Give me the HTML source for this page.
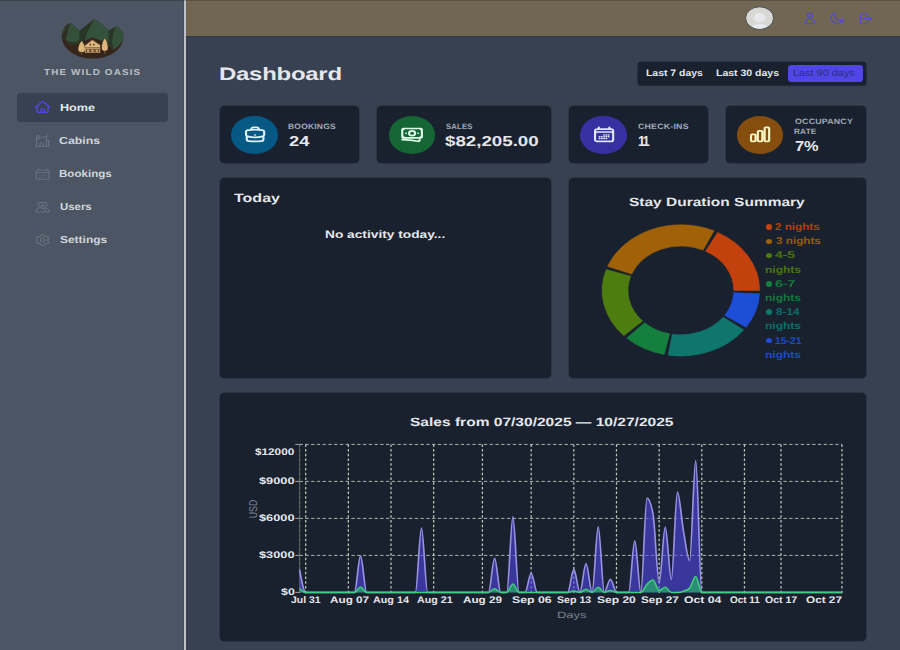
<!DOCTYPE html>
<html lang="en"><head><meta charset="utf-8"><title>The Wild Oasis</title>
<style>
*{margin:0;padding:0;box-sizing:border-box}
html,body{width:900px;height:650px;overflow:hidden;background:#374151;font-family:"Liberation Sans", sans-serif}
body{position:relative}
ul{list-style:none}
.sidebar{position:absolute;left:0;top:0;width:186px;height:650px;background:#4b5563;border-right:2px solid #bec1c7}
.sidebar:after{content:"";position:absolute;left:183px;top:0;width:1px;height:650px;background:#434e5d}
.header{position:absolute;left:186px;top:0;width:714px;height:37px;background:#716652;border-bottom:1px solid #313c4b}
.topline{position:absolute;left:0;top:0;width:900px;height:1px;background:rgba(15,15,25,.23);z-index:9}
.t{position:absolute;white-space:nowrap;line-height:1;text-rendering:geometricPrecision;transform-origin:0 50%;display:block}
.ic{position:absolute;overflow:visible}
.logo{position:absolute}
.card{position:absolute;background:#19212f;border-radius:4.5px/4px;box-shadow:0 0 0 0.5px #222b3a}
.circ{position:absolute;border-radius:50%}
.dot{position:absolute;border-radius:50%}
.navbg{position:absolute;background:#374151;border-radius:3.5px/3px}
.filter{position:absolute;background:#19212f;border-radius:3.5px/3px;box-shadow:0 0 0 0.6px #222b3a,0 .6px 1.2px rgba(0,0,0,.4)}
.fbtn{position:absolute;background:#4f46e5;border-radius:3.5px/3px}
</style></head><body>
<aside class="sidebar">
<svg class="logo" viewBox="55 15 75 48" style="left:55px;top:15px;width:75px;height:48px">
<defs><clipPath id="bowl"><path d="M61.8,36 C61.8,30 65.5,24.2 70.5,23.2 L80,30.8 L93,20 Q94.6,18.8 96.2,20 L109,30.4 L114.5,27.2 Q116.3,26.2 118,27.4 C121.5,29.8 123.4,33 123.4,36.5 C123.4,49 110,58.6 92.8,58.6 C75.5,58.6 61.8,49 61.8,36 Z"/></clipPath></defs>
<g clip-path="url(#bowl)">
<rect x="55" y="15" width="75" height="48" fill="#35251a"/>
<path d="M61,36 L63.5,30 L70.5,22.5 L75,26.5 L80,30.5 L80.5,40 L74,42.5 L68,41.5 L64,39 Z" fill="#33503a"/>
<path d="M60,37 L70.5,22.5 L68,30 L66,39 L63,40 Z" fill="#2c2f22"/>
<path d="M80,31 L94.5,18.5 L109.5,30.5 L109.5,43 L101,40.5 L92.3,37.5 L85.5,40.5 L80,42 Z" fill="#34513b"/>
<path d="M79.5,31 L94.5,18.5 L90,27 L86.5,34 L85,41 L79.5,42.5 Z" fill="#293527"/>
<path d="M109,30.5 L116,26 L125,31 L125,38 L119,45.5 L113.5,50 L109,46 Z" fill="#33503a"/>
<path d="M108.5,30.8 L116,26 L113.2,33 L112.2,42 L113.5,50 L108.5,46 Z" fill="#293527"/>
<path d="M64,39 L68,41.5 L74,42.5 L80.5,40 L80,44 L70,46 Z" fill="#2f3a27" opacity=".7"/>
</g>
<path d="M81.7,41 C83.6,43 85.2,46.5 85,49.5 C84.8,51.6 83.4,52.2 81.7,52.2 C80,52.2 78.5,51.6 78.3,49.5 C78.1,46.5 79.8,43 81.7,41 Z" fill="#dcb67c"/>
<path d="M104.8,38.4 C106.6,40.6 108,44.5 107.8,48 C107.7,50.3 106.4,51 104.8,51 C103.2,51 101.9,50.3 101.8,48 C101.6,44.5 103,40.6 104.8,38.4 Z" fill="#dcb67c"/>
<rect x="81.2" y="51.5" width="1" height="3" fill="#7a5a3a"/><rect x="104.3" y="50.5" width="1" height="3.4" fill="#7a5a3a"/>
<path d="M84.8,45.4 L92.3,39.8 L100.2,45 L100.2,52.8 L84.8,52.8 Z" fill="#deb97f"/>
<path d="M84.2,46 L92.3,39.8 L100.8,45.4" fill="none" stroke="#6b4a2c" stroke-width="0.9"/>
<rect x="84.8" y="47.4" width="15.4" height="0.9" fill="#6b4a2c"/>
<rect x="85.6" y="49.2" width="13.8" height="3" fill="#5a3e26"/>
<rect x="86.8" y="49.8" width="2.6" height="1.8" fill="#d9b27a"/><rect x="91.2" y="49.8" width="2.6" height="1.8" fill="#d9b27a"/><rect x="95.6" y="49.8" width="2.6" height="1.8" fill="#d9b27a"/>
<rect x="89.6" y="43.8" width="1.5" height="1.7" fill="#5a3e26"/><rect x="93" y="43.8" width="1.5" height="1.7" fill="#5a3e26"/>
</svg>
<span class="t" id="logo_t" style="left:44.29px;top:67px;font-size:8.60px;line-height:10px;color:#bec1c5;font-weight:700;transform:scaleX(1.1494);letter-spacing:1px;">THE WILD OASIS</span>
<nav><ul>
<li>
<div class="navbg" style="left:17px;top:93.1px;width:150.8px;height:28.5px"></div>
<svg class="ic" style="left:34.10px;top:100.40px;width:17.30px;height:14.20px" viewBox="0 0 24 24" preserveAspectRatio="none" fill="none" stroke="#4f46e5" stroke-width="2.1" stroke-linecap="round" stroke-linejoin="round"><path d="M2.25 12l8.954-8.955c.44-.439 1.152-.439 1.591 0L21.75 12M4.5 9.75v10.125c0 .621.504 1.125 1.125 1.125H9.75v-4.875c0-.621.504-1.125 1.125-1.125h2.25c.621 0 1.125.504 1.125 1.125V21h4.125c.621 0 1.125-.504 1.125-1.125V9.75M8.25 21h8.25"/></svg>
<span class="t" id="nav0" style="left:59.63px;top:103px;font-size:10.20px;line-height:11px;color:#e5e7eb;font-weight:700;transform:scaleX(1.2382);">Home</span>
</li>
<li>
<svg class="ic" style="left:34.10px;top:133.50px;width:17.30px;height:14.20px" viewBox="0 0 24 24" preserveAspectRatio="none" fill="none" stroke="#6a7382" stroke-width="1.5" stroke-linecap="round" stroke-linejoin="round"><path d="M8.25 21v-4.875c0-.621.504-1.125 1.125-1.125h2.25c.621 0 1.125.504 1.125 1.125V21m0 0h4.5V3.545M12.75 21h7.5V10.75M2.25 21h1.5m18 0h-18M2.25 9l4.5-1.636M18.75 3l-1.5.545m0 6.205l3 1m1.5.5l-1.5-.5M6.75 7.364V3h-3v18m3-13.636l10.5-3.819"/></svg>
<span class="t" id="nav1" style="left:59.26px;top:136px;font-size:10.20px;line-height:11px;color:#d3d6db;font-weight:700;transform:scaleX(1.2101);">Cabins</span>
</li>
<li>
<svg class="ic" style="left:34.10px;top:166.60px;width:17.30px;height:14.20px" viewBox="0 0 24 24" preserveAspectRatio="none" fill="none" stroke="#6a7382" stroke-width="1.5" stroke-linecap="round" stroke-linejoin="round"><path d="M6.75 3v2.25M17.25 3v2.25M3 18.75V7.5a2.25 2.25 0 012.25-2.25h13.5A2.25 2.25 0 0121 7.5v11.25m-18 0A2.25 2.25 0 005.25 21h13.5A2.25 2.25 0 0021 18.75m-18 0v-7.5A2.25 2.25 0 015.25 9h13.5A2.25 2.25 0 0121 11.25v7.5m-9-6h.008v.008H12v-.008zM12 15h.008v.008H12V15zm0 2.25h.008v.008H12v-.008zM9.75 15h.008v.008H9.75V15zm0 2.25h.008v.008H9.75v-.008zM7.5 15h.008v.008H7.5V15zm0 2.25h.008v.008H7.5v-.008zm6.75-4.5h.008v.008h-.008v-.008zm0 2.25h.008v.008h-.008V15zm0 2.25h.008v.008h-.008v-.008zm2.25-4.5h.008v.008H16.5v-.008zm0 2.25h.008v.008H16.5V15z"/></svg>
<span class="t" id="nav2" style="left:59.19px;top:169px;font-size:10.20px;line-height:11px;color:#d3d6db;font-weight:700;transform:scaleX(1.1360);">Bookings</span>
</li>
<li>
<svg class="ic" style="left:34.10px;top:199.70px;width:17.30px;height:14.20px" viewBox="0 0 24 24" preserveAspectRatio="none" fill="none" stroke="#6a7382" stroke-width="1.5" stroke-linecap="round" stroke-linejoin="round"><path d="M12.4 7.2a3.4 3.4 0 11-6.8 0 3.4 3.4 0 016.8 0zM13 4.4a3.4 3.4 0 110 5.6M2.5 20.3v-.8a6.5 6.5 0 0113 0v.8zM15.5 20.3h6v-.8a6 6 0 00-8.2-5.6"/></svg>
<span class="t" id="nav3" style="left:59.60px;top:202px;font-size:10.20px;line-height:11px;color:#d3d6db;font-weight:700;transform:scaleX(1.1175);">Users</span>
</li>
<li>
<svg class="ic" style="left:34.10px;top:232.80px;width:17.30px;height:14.20px" viewBox="0 0 24 24" preserveAspectRatio="none" fill="none" stroke="#6a7382" stroke-width="1.5" stroke-linecap="round" stroke-linejoin="round"><path d="M9.594 3.94c.09-.542.56-.94 1.11-.94h2.593c.55 0 1.02.398 1.11.94l.213 1.281c.063.374.313.686.645.87.074.04.147.083.22.127.324.196.72.257 1.075.124l1.217-.456a1.125 1.125 0 011.37.49l1.296 2.247a1.125 1.125 0 01-.26 1.431l-1.003.827c-.293.24-.438.613-.431.992a6.759 6.759 0 010 .255c-.007.378.138.75.43.99l1.005.828c.424.35.534.954.26 1.43l-1.298 2.247a1.125 1.125 0 01-1.369.491l-1.217-.456c-.355-.133-.75-.072-1.076.124a6.57 6.57 0 01-.22.128c-.331.183-.581.495-.644.869l-.213 1.28c-.09.543-.56.941-1.11.941h-2.594c-.55 0-1.02-.398-1.11-.94l-.213-1.281c-.062-.374-.312-.686-.644-.87a6.52 6.52 0 01-.22-.127c-.325-.196-.72-.257-1.076-.124l-1.217.456a1.125 1.125 0 01-1.369-.49l-1.297-2.247a1.125 1.125 0 01.26-1.431l1.004-.827c.292-.24.437-.613.43-.992a6.932 6.932 0 010-.255c.007-.378-.138-.75-.43-.99l-1.004-.828a1.125 1.125 0 01-.26-1.43l1.297-2.247a1.125 1.125 0 011.37-.491l1.216.456c.356.133.751.072 1.076-.124.072-.044.146-.087.22-.128.332-.183.582-.495.644-.869l.214-1.281z M15 12a3 3 0 11-6 0 3 3 0 016 0z"/></svg>
<span class="t" id="nav4" style="left:59.81px;top:235px;font-size:10.20px;line-height:11px;color:#d3d6db;font-weight:700;transform:scaleX(1.1730);">Settings</span>
</li>
</ul></nav>
</aside>
<header class="header"><div style="position:absolute;left:-186px;top:0;width:900px;height:36px">
<svg class="ic" style="left:743px;top:4px;width:34px;height:29px" viewBox="743 4 34 29">
<ellipse cx="759.6" cy="18.1" rx="14.0" ry="11.3" fill="#d8d8d5" stroke="#3c4350" stroke-width="0.9"/>
<ellipse cx="759.6" cy="17.6" rx="5.9" ry="4.6" fill="#e7e8eb"/>
<path d="M751.6,26.4 Q759.6,21.6 767.6,26.4 Q759.6,31 751.6,26.4 Z" fill="#e9eaed"/>
</svg>
<svg class="ic" style="left:802.33px;top:11.90px;width:15.84px;height:13.00px" viewBox="0 0 24 24" preserveAspectRatio="none" fill="none" stroke="#4f46e5" stroke-width="1.8" stroke-linecap="round" stroke-linejoin="round"><path d="M15.75 6a3.75 3.75 0 11-7.5 0 3.75 3.75 0 017.5 0zM4.501 20.118a7.5 7.5 0 0114.998 0A17.933 17.933 0 0112 21.75c-2.676 0-5.216-.584-7.499-1.632z"/></svg>
<svg class="ic" style="left:829.08px;top:11.90px;width:15.84px;height:13.00px" viewBox="0 0 24 24" preserveAspectRatio="none" fill="none" stroke="#4f46e5" stroke-width="1.8" stroke-linecap="round" stroke-linejoin="round"><path d="M21.752 15.002A9.718 9.718 0 0118 15.75c-5.385 0-9.75-4.365-9.75-9.75 0-1.33.266-2.597.748-3.752A9.753 9.753 0 003 11.25C3 16.635 7.365 21 12.75 21a9.753 9.753 0 009.002-5.998z"/></svg>
<svg class="ic" style="left:856.58px;top:11.90px;width:15.84px;height:13.00px" viewBox="0 0 24 24" preserveAspectRatio="none" fill="none" stroke="#4f46e5" stroke-width="1.8" stroke-linecap="round" stroke-linejoin="round"><path d="M15.75 9V5.25A2.25 2.25 0 0013.5 3h-6a2.25 2.25 0 00-2.25 2.25v13.5A2.25 2.25 0 007.5 21h6a2.25 2.25 0 002.25-2.25V15m3 0l3-3m0 0l-3-3m3 3H9"/></svg>
</div></header>
<main>
<span class="t" id="h1" style="left:219.01px;top:64px;font-size:18.00px;line-height:20px;color:#e5e7eb;font-weight:700;transform:scaleX(1.3314);letter-spacing:-0.2px;">Dashboard</span>
<div class="filter" style="left:638px;top:62.2px;width:227.7px;height:22.6px"></div>
<div class="fbtn" style="left:787.5px;top:65px;width:75.3px;height:17px"></div>
<span class="t" id="f1" style="left:646.35px;top:68px;font-size:9.30px;line-height:10px;color:#e5e7eb;font-weight:700;transform:scaleX(1.1215);">Last 7 days</span>
<span class="t" id="f2" style="left:716.33px;top:68px;font-size:9.30px;line-height:10px;color:#e5e7eb;font-weight:700;transform:scaleX(1.1281);">Last 30 days</span>
<span class="t" id="f3" style="left:793.26px;top:68px;font-size:9.30px;line-height:10px;color:#2b2f7a;font-weight:400;transform:scaleX(1.1718);">Last 90 days</span>
<div class="card" style="left:220.1px;top:106.2px;width:139.4px;height:56.7px">
</div>
<div class="circ" style="left:231.4px;top:116.1px;width:46.2px;height:37.8px;background:#075985"></div>
<svg class="ic" style="left:242.50px;top:125.00px;width:24.20px;height:18.80px" viewBox="0 0 24 24" preserveAspectRatio="none" fill="none" stroke="#e0f2fe" stroke-width="2.1" stroke-linecap="round" stroke-linejoin="round"><path d="M20.25 14.15v4.25c0 1.094-.787 2.036-1.872 2.18-2.087.277-4.216.42-6.378.42s-4.291-.143-6.378-.42c-1.085-.144-1.872-1.086-1.872-2.18v-4.25m16.5 0a2.18 2.18 0 00.75-1.661V8.706c0-1.081-.768-2.015-1.837-2.175a48.114 48.114 0 00-3.413-.387m4.5 8.006c-.194.165-.42.295-.673.38A23.978 23.978 0 0112 15.75c-2.648 0-5.195-.429-7.577-1.22a2.016 2.016 0 01-.673-.38m0 0A2.18 2.18 0 013 12.489V8.706c0-1.081.768-2.015 1.837-2.175a48.111 48.111 0 013.413-.387m7.5 0V5.25A2.25 2.25 0 0013.5 3h-3a2.25 2.25 0 00-2.25 2.25v.894m7.5 0a48.667 48.667 0 00-7.5 0M12 12.75h.008v.008H12v-.008z"/></svg>
<span class="t" id="st0_0" style="left:288.06px;top:122px;font-size:7.80px;line-height:9px;color:#a3a9b4;font-weight:700;transform:scaleX(1.0861);letter-spacing:0.2px;">BOOKINGS</span>
<span class="t" id="sv0" style="left:288.65px;top:134px;font-size:14.40px;line-height:16px;color:#e5e7eb;font-weight:700;transform:scaleX(1.2704);">24</span>
<div class="card" style="left:377.4px;top:106.2px;width:174.1px;height:56.7px">
</div>
<div class="circ" style="left:388.7px;top:116.1px;width:46.2px;height:37.8px;background:#166534"></div>
<svg class="ic" style="left:399.80px;top:125.00px;width:24.20px;height:18.80px" viewBox="0 0 24 24" preserveAspectRatio="none" fill="none" stroke="#dcfce7" stroke-width="2.1" stroke-linecap="round" stroke-linejoin="round"><path d="M2.25 18.75a60.07 60.07 0 0115.797 2.101c.727.198 1.453-.342 1.453-1.096V18.75M3.75 4.5v.75A.75.75 0 013 6h-.75m0 0v-.375c0-.621.504-1.125 1.125-1.125H20.25M2.25 6v9m18-10.5v.75c0 .414.336.75.75.75h.75m-1.5-1.5h.375c.621 0 1.125.504 1.125 1.125v9.75c0 .621-.504 1.125-1.125 1.125h-.375m1.5-1.5H21a.75.75 0 00-.75.75v.75m0 0H3.75m0 0h-.375a1.125 1.125 0 01-1.125-1.125V15m1.5 1.5v-.75A.75.75 0 003 15h-.75M15 10.5a3 3 0 11-6 0 3 3 0 016 0zm3 0h.008v.008H18V10.5zm-12 0h.008v.008H6V10.5z"/></svg>
<span class="t" id="st1_0" style="left:446.22px;top:122px;font-size:7.80px;line-height:9px;color:#a3a9b4;font-weight:700;transform:scaleX(0.9865);letter-spacing:0.2px;">SALES</span>
<span class="t" id="sv1" style="left:445.43px;top:134px;font-size:14.40px;line-height:16px;color:#e5e7eb;font-weight:700;transform:scaleX(1.3006);">$82,205.00</span>
<div class="card" style="left:568.9px;top:106.2px;width:139.0px;height:56.7px">
</div>
<div class="circ" style="left:580.4px;top:116.1px;width:46.2px;height:37.8px;background:#3730a3"></div>
<svg class="ic" style="left:591.50px;top:125.00px;width:24.20px;height:18.80px" viewBox="0 0 24 24" preserveAspectRatio="none" fill="none" stroke="#e0e7ff" stroke-width="2.1" stroke-linecap="round" stroke-linejoin="round"><path d="M6.75 3v2.25M17.25 3v2.25M3 18.75V7.5a2.25 2.25 0 012.25-2.25h13.5A2.25 2.25 0 0121 7.5v11.25m-18 0A2.25 2.25 0 005.25 21h13.5A2.25 2.25 0 0021 18.75m-18 0v-7.5A2.25 2.25 0 015.25 9h13.5A2.25 2.25 0 0121 11.25v7.5m-9-6h.008v.008H12v-.008zM12 15h.008v.008H12V15zm0 2.25h.008v.008H12v-.008zM9.75 15h.008v.008H9.75V15zm0 2.25h.008v.008H9.75v-.008zM7.5 15h.008v.008H7.5V15zm0 2.25h.008v.008H7.5v-.008zm6.75-4.5h.008v.008h-.008v-.008zm0 2.25h.008v.008h-.008V15zm0 2.25h.008v.008h-.008v-.008zm2.25-4.5h.008v.008H16.5v-.008zm0 2.25h.008v.008H16.5V15z"/></svg>
<span class="t" id="st2_0" style="left:638.24px;top:122px;font-size:7.80px;line-height:9px;color:#a3a9b4;font-weight:700;transform:scaleX(1.1246);letter-spacing:0.2px;">CHECK-INS</span>
<span class="t" id="sv2" style="left:637.69px;top:134px;font-size:14.40px;line-height:16px;color:#e5e7eb;font-weight:700;transform:scaleX(0.8974);letter-spacing:-2.2px;">11</span>
<div class="card" style="left:725.7px;top:106.2px;width:140.0px;height:56.7px">
</div>
<div class="circ" style="left:736.9px;top:116.1px;width:46.2px;height:37.8px;background:#854d0e"></div>
<svg class="ic" style="left:748.00px;top:125.00px;width:24.20px;height:18.80px" viewBox="0 0 24 24" preserveAspectRatio="none" fill="none" stroke="#fef9c3" stroke-width="2.1" stroke-linecap="round" stroke-linejoin="round"><path d="M3 13.125C3 12.504 3.504 12 4.125 12h2.25c.621 0 1.125.504 1.125 1.125v6.75C7.5 20.496 6.996 21 6.375 21h-2.25A1.125 1.125 0 013 19.875v-6.75zM9.75 8.625c0-.621.504-1.125 1.125-1.125h2.25c.621 0 1.125.504 1.125 1.125v11.25c0 .621-.504 1.125-1.125 1.125h-2.25a1.125 1.125 0 01-1.125-1.125V8.625zM16.5 4.125c0-.621.504-1.125 1.125-1.125h2.25C20.496 3 21 3.504 21 4.125v15.75c0 .621-.504 1.125-1.125 1.125h-2.25a1.125 1.125 0 01-1.125-1.125V4.125z"/></svg>
<span class="t" id="st3_0" style="left:794.64px;top:117px;font-size:7.80px;line-height:9px;color:#a3a9b4;font-weight:700;transform:scaleX(1.1272);letter-spacing:0.2px;">OCCUPANCY</span>
<span class="t" id="st3_1" style="left:794.28px;top:127px;font-size:7.80px;line-height:9px;color:#a3a9b4;font-weight:700;transform:scaleX(1.0504);letter-spacing:0.2px;">RATE</span>
<span class="t" id="sv3" style="left:794.52px;top:139px;font-size:14.40px;line-height:16px;color:#e5e7eb;font-weight:700;transform:scaleX(1.1372);">7%</span>
<div class="card" style="left:220px;top:178px;width:331.3px;height:200.3px"></div>
<span class="t" id="today" style="left:234.00px;top:191px;font-size:12.00px;line-height:14px;color:#e5e7eb;font-weight:700;transform:scaleX(1.3336);">Today</span>
<span class="t" id="noact" style="left:325.46px;top:229px;font-size:10.80px;line-height:12px;color:#e5e7eb;font-weight:700;transform:scaleX(1.2709);">No activity today...</span>
<div class="card" style="left:569px;top:178px;width:296.8px;height:200.3px"></div>
<span class="t" id="stay" style="left:629.04px;top:195px;font-size:12.00px;line-height:14px;color:#e5e7eb;font-weight:700;transform:scaleX(1.2917);">Stay Duration Summary</span>
<svg class="ic" style="left:595px;top:218px;width:172px;height:145px" viewBox="595 218 172 145">
<path d="M759.70,290.40 A78.8,65.6 0 0 0 717.67,232.38 L705.59,251.13 A52.9,44.4 0 0 1 733.80,290.40 Z" fill="#c2410c" stroke="#c2410c" stroke-width="0.6"/>
<path d="M713.98,230.86 A78.8,65.6 0 0 0 607.61,266.31 L631.70,274.09 A52.9,44.4 0 0 1 703.10,250.10 Z" fill="#a16207" stroke="#a16207" stroke-width="0.6"/>
<path d="M606.19,269.54 A78.8,65.6 0 0 0 623.87,335.67 L642.61,321.04 A52.9,44.4 0 0 1 630.75,276.28 Z" fill="#4d7c0f" stroke="#4d7c0f" stroke-width="0.6"/>
<path d="M626.79,338.09 A78.8,65.6 0 0 0 664.15,354.50 L669.66,333.79 A52.9,44.4 0 0 1 644.58,322.68 Z" fill="#15803d" stroke="#15803d" stroke-width="0.6"/>
<path d="M668.20,355.14 A78.8,65.6 0 0 0 743.76,329.96 L723.10,317.18 A52.9,44.4 0 0 1 672.38,334.22 Z" fill="#0f766e" stroke="#0f766e" stroke-width="0.6"/>
<path d="M746.16,327.17 A78.8,65.6 0 0 0 759.59,293.83 L733.73,292.72 A52.9,44.4 0 0 1 724.71,315.29 Z" fill="#1d4ed8" stroke="#1d4ed8" stroke-width="0.6"/>
</svg>
<div class="dot" style="left:765.8px;top:224.2px;width:6.4px;height:5.4px;background:#c2410c"></div>
<span class="t" id="lg0" style="left:774.82px;top:222px;font-size:9.90px;line-height:11px;color:#c2410c;font-weight:700;transform:scaleX(1.1819);opacity:.9;">2 nights</span>
<div class="dot" style="left:765.8px;top:238.5px;width:6.4px;height:5.4px;background:#a16207"></div>
<span class="t" id="lg1" style="left:775.51px;top:236px;font-size:9.90px;line-height:11px;color:#a16207;font-weight:700;transform:scaleX(1.1838);opacity:.9;">3 nights</span>
<div class="dot" style="left:765.8px;top:252.6px;width:6.4px;height:5.4px;background:#4d7c0f"></div>
<span class="t" id="lg2" style="left:774.98px;top:250px;font-size:9.90px;line-height:11px;color:#4d7c0f;font-weight:700;transform:scaleX(1.4060);opacity:.9;">4-5</span>
<span class="t" id="lg3" style="left:765.10px;top:265px;font-size:9.90px;line-height:11px;color:#4d7c0f;font-weight:700;transform:scaleX(1.2154);opacity:.9;">nights</span>
<div class="dot" style="left:765.8px;top:281.2px;width:6.4px;height:5.4px;background:#15803d"></div>
<span class="t" id="lg4" style="left:774.68px;top:279px;font-size:9.90px;line-height:11px;color:#15803d;font-weight:700;transform:scaleX(1.4315);opacity:.9;">6-7</span>
<span class="t" id="lg5" style="left:765.10px;top:293px;font-size:9.90px;line-height:11px;color:#15803d;font-weight:700;transform:scaleX(1.2154);opacity:.9;">nights</span>
<div class="dot" style="left:765.8px;top:309.2px;width:6.4px;height:5.4px;background:#0f766e"></div>
<span class="t" id="lg6" style="left:775.56px;top:307px;font-size:9.90px;line-height:11px;color:#0f766e;font-weight:700;transform:scaleX(1.1894);opacity:.9;">8-14</span>
<span class="t" id="lg7" style="left:765.10px;top:321px;font-size:9.90px;line-height:11px;color:#0f766e;font-weight:700;transform:scaleX(1.2154);opacity:.9;">nights</span>
<div class="dot" style="left:765.8px;top:337.8px;width:6.4px;height:5.4px;background:#1d4ed8"></div>
<span class="t" id="lg8" style="left:775.00px;top:336px;font-size:9.90px;line-height:11px;color:#1d4ed8;font-weight:700;transform:scaleX(1.0521);opacity:.9;">15-21</span>
<span class="t" id="lg9" style="left:765.10px;top:350px;font-size:9.90px;line-height:11px;color:#1d4ed8;font-weight:700;transform:scaleX(1.2154);opacity:.9;">nights</span>
<div class="card" style="left:220px;top:392.8px;width:645.8px;height:247.8px"></div>
<span class="t" id="salesh" style="left:410.23px;top:415px;font-size:12.00px;line-height:14px;color:#e5e7eb;font-weight:700;transform:scaleX(1.2948);">Sales from 07/30/2025 — 10/27/2025</span>
<svg class="ic" style="left:220px;top:393px;width:646px;height:247px" viewBox="220 393 646 247">
<line x1="299.6" y1="555.40" x2="841.97" y2="555.40" stroke="#c0d4c4" stroke-width="0.85" stroke-dasharray="3.3 2.46"/>
<line x1="299.6" y1="518.40" x2="841.97" y2="518.40" stroke="#c0d4c4" stroke-width="0.85" stroke-dasharray="3.3 2.46"/>
<line x1="299.6" y1="481.40" x2="841.97" y2="481.40" stroke="#c0d4c4" stroke-width="0.85" stroke-dasharray="3.3 2.46"/>
<line x1="299.6" y1="444.40" x2="841.97" y2="444.40" stroke="#c0d4c4" stroke-width="0.85" stroke-dasharray="3.3 2.46"/>
<line x1="299.60" y1="444.40" x2="299.60" y2="595.60" stroke="#c0d4c4" stroke-width="1.25" stroke-dasharray="2.5 2.22" opacity="0.45"/>
<line x1="305.69" y1="444.40" x2="305.69" y2="595.60" stroke="#c0d4c4" stroke-width="1.25" stroke-dasharray="2.5 2.22" opacity="0.95"/>
<line x1="348.35" y1="444.40" x2="348.35" y2="595.60" stroke="#c0d4c4" stroke-width="1.25" stroke-dasharray="2.5 2.22" opacity="0.95"/>
<line x1="391.01" y1="444.40" x2="391.01" y2="595.60" stroke="#c0d4c4" stroke-width="1.25" stroke-dasharray="2.5 2.22" opacity="0.95"/>
<line x1="433.67" y1="444.40" x2="433.67" y2="595.60" stroke="#c0d4c4" stroke-width="1.25" stroke-dasharray="2.5 2.22" opacity="0.95"/>
<line x1="482.42" y1="444.40" x2="482.42" y2="595.60" stroke="#c0d4c4" stroke-width="1.25" stroke-dasharray="2.5 2.22" opacity="0.95"/>
<line x1="531.17" y1="444.40" x2="531.17" y2="595.60" stroke="#c0d4c4" stroke-width="1.25" stroke-dasharray="2.5 2.22" opacity="0.95"/>
<line x1="573.83" y1="444.40" x2="573.83" y2="595.60" stroke="#c0d4c4" stroke-width="1.25" stroke-dasharray="2.5 2.22" opacity="0.95"/>
<line x1="616.49" y1="444.40" x2="616.49" y2="595.60" stroke="#c0d4c4" stroke-width="1.25" stroke-dasharray="2.5 2.22" opacity="0.95"/>
<line x1="659.15" y1="444.40" x2="659.15" y2="595.60" stroke="#c0d4c4" stroke-width="1.25" stroke-dasharray="2.5 2.22" opacity="0.95"/>
<line x1="701.80" y1="444.40" x2="701.80" y2="595.60" stroke="#c0d4c4" stroke-width="1.25" stroke-dasharray="2.5 2.22" opacity="0.95"/>
<line x1="744.46" y1="444.40" x2="744.46" y2="595.60" stroke="#c0d4c4" stroke-width="1.25" stroke-dasharray="2.5 2.22" opacity="0.95"/>
<line x1="781.03" y1="444.40" x2="781.03" y2="595.60" stroke="#c0d4c4" stroke-width="1.25" stroke-dasharray="2.5 2.22" opacity="0.95"/>
<line x1="841.97" y1="444.40" x2="841.97" y2="595.60" stroke="#c0d4c4" stroke-width="1.25" stroke-dasharray="2.5 2.22" opacity="0.95"/>
<line x1="299.6" y1="444.40" x2="299.6" y2="592.40" stroke="#5b6563" stroke-width="0.9"/>
<line x1="295.30" y1="592.40" x2="299.6" y2="592.40" stroke="#c9d3cc" stroke-width="0.75"/>
<line x1="295.30" y1="555.40" x2="299.6" y2="555.40" stroke="#c9d3cc" stroke-width="0.75"/>
<line x1="295.30" y1="518.40" x2="299.6" y2="518.40" stroke="#c9d3cc" stroke-width="0.75"/>
<line x1="295.30" y1="481.40" x2="299.6" y2="481.40" stroke="#c9d3cc" stroke-width="0.75"/>
<line x1="295.30" y1="444.40" x2="299.6" y2="444.40" stroke="#c9d3cc" stroke-width="0.75"/>
<path d="M299.60,569.71C301.63,581.05 303.66,592.40 305.69,592.40L311.79,592.40L317.88,592.40L323.98,592.40L330.07,592.40L336.16,592.40L342.26,592.40L348.35,592.40L354.45,592.40C356.48,592.40 358.51,555.89 360.54,555.89C362.57,555.89 364.60,592.40 366.63,592.40L372.73,592.40L378.82,592.40L384.92,592.40L391.01,592.40L397.10,592.40L403.20,592.40L409.29,592.40L415.39,592.40C417.42,592.40 419.45,528.02 421.48,528.02C423.51,528.02 425.54,592.40 427.57,592.40L433.67,592.40L439.76,592.40L445.86,592.40L451.95,592.40L458.04,592.40L464.14,592.40L470.23,592.40L476.33,592.40L482.42,592.40L488.51,592.40C490.55,592.40 492.58,558.24 494.61,558.24C496.64,558.24 498.67,592.40 500.70,592.40L506.80,592.40C508.83,592.40 510.86,516.80 512.89,516.80C514.92,516.80 516.95,592.40 518.98,592.40L525.08,592.40C527.11,592.40 529.14,573.28 531.17,573.28C533.20,573.28 535.23,592.40 537.27,592.40L543.36,592.40L549.45,592.40L555.55,592.40L561.64,592.40L567.74,592.40C569.77,592.40 571.80,569.34 573.83,569.34C575.86,569.34 577.89,592.40 579.92,592.40C581.96,592.40 583.99,563.54 586.02,563.54C588.05,563.54 590.08,592.40 592.11,592.40C594.14,592.40 596.17,526.91 598.21,526.91C600.24,526.91 602.27,592.40 604.30,592.40C606.33,592.40 608.36,579.20 610.39,579.20C612.43,579.20 614.46,592.40 616.49,592.40L622.58,592.40L628.68,592.40C630.71,592.40 632.74,540.85 634.77,540.85C636.80,540.85 638.83,592.40 640.86,592.40C642.90,592.40 644.93,498.05 646.96,498.05C648.99,498.05 651.02,503.44 653.05,514.21C655.08,524.98 657.11,582.66 659.15,582.66C661.18,582.66 663.21,527.03 665.24,527.03C667.27,527.03 669.30,579.45 671.33,579.45C673.37,579.45 675.40,492.13 677.43,492.13C679.46,492.13 681.49,520.09 683.52,531.47C685.55,542.86 687.58,560.46 689.62,560.46C691.65,560.46 693.68,460.56 695.71,460.56C697.74,460.56 699.77,592.40 701.80,592.40L707.90,592.40L713.99,592.40L720.09,592.40L726.18,592.40L732.27,592.40L738.37,592.40L744.46,592.40L750.56,592.40L756.65,592.40L762.74,592.40L768.84,592.40L774.93,592.40L781.03,592.40L787.12,592.40L793.21,592.40L799.31,592.40L805.40,592.40L811.50,592.40L817.59,592.40L823.68,592.40L829.78,592.40L835.87,592.40L841.97,592.40L841.97,592.4L299.6,592.4Z" fill="#4f46e5" fill-opacity="0.6"/>
<path d="M299.60,569.71C301.63,581.05 303.66,592.40 305.69,592.40L311.79,592.40L317.88,592.40L323.98,592.40L330.07,592.40L336.16,592.40L342.26,592.40L348.35,592.40L354.45,592.40C356.48,592.40 358.51,555.89 360.54,555.89C362.57,555.89 364.60,592.40 366.63,592.40L372.73,592.40L378.82,592.40L384.92,592.40L391.01,592.40L397.10,592.40L403.20,592.40L409.29,592.40L415.39,592.40C417.42,592.40 419.45,528.02 421.48,528.02C423.51,528.02 425.54,592.40 427.57,592.40L433.67,592.40L439.76,592.40L445.86,592.40L451.95,592.40L458.04,592.40L464.14,592.40L470.23,592.40L476.33,592.40L482.42,592.40L488.51,592.40C490.55,592.40 492.58,558.24 494.61,558.24C496.64,558.24 498.67,592.40 500.70,592.40L506.80,592.40C508.83,592.40 510.86,516.80 512.89,516.80C514.92,516.80 516.95,592.40 518.98,592.40L525.08,592.40C527.11,592.40 529.14,573.28 531.17,573.28C533.20,573.28 535.23,592.40 537.27,592.40L543.36,592.40L549.45,592.40L555.55,592.40L561.64,592.40L567.74,592.40C569.77,592.40 571.80,569.34 573.83,569.34C575.86,569.34 577.89,592.40 579.92,592.40C581.96,592.40 583.99,563.54 586.02,563.54C588.05,563.54 590.08,592.40 592.11,592.40C594.14,592.40 596.17,526.91 598.21,526.91C600.24,526.91 602.27,592.40 604.30,592.40C606.33,592.40 608.36,579.20 610.39,579.20C612.43,579.20 614.46,592.40 616.49,592.40L622.58,592.40L628.68,592.40C630.71,592.40 632.74,540.85 634.77,540.85C636.80,540.85 638.83,592.40 640.86,592.40C642.90,592.40 644.93,498.05 646.96,498.05C648.99,498.05 651.02,503.44 653.05,514.21C655.08,524.98 657.11,582.66 659.15,582.66C661.18,582.66 663.21,527.03 665.24,527.03C667.27,527.03 669.30,579.45 671.33,579.45C673.37,579.45 675.40,492.13 677.43,492.13C679.46,492.13 681.49,520.09 683.52,531.47C685.55,542.86 687.58,560.46 689.62,560.46C691.65,560.46 693.68,460.56 695.71,460.56C697.74,460.56 699.77,592.40 701.80,592.40L707.90,592.40L713.99,592.40L720.09,592.40L726.18,592.40L732.27,592.40L738.37,592.40L744.46,592.40L750.56,592.40L756.65,592.40L762.74,592.40L768.84,592.40L774.93,592.40L781.03,592.40L787.12,592.40L793.21,592.40L799.31,592.40L805.40,592.40L811.50,592.40L817.59,592.40L823.68,592.40L829.78,592.40L835.87,592.40L841.97,592.40" fill="none" stroke="#9892e2" stroke-width="1.65" stroke-linejoin="round"/>
<path d="M299.60,588.45C301.63,590.43 303.66,592.40 305.69,592.40L311.79,592.40L317.88,592.40L323.98,592.40L330.07,592.40L336.16,592.40L342.26,592.40L348.35,592.40L354.45,592.40C356.48,592.40 358.51,586.97 360.54,586.97C362.57,586.97 364.60,592.40 366.63,592.40L372.73,592.40L378.82,592.40L384.92,592.40L391.01,592.40L397.10,592.40L403.20,592.40L409.29,592.40L415.39,592.40L421.48,592.40L427.57,592.40L433.67,592.40L439.76,592.40L445.86,592.40L451.95,592.40L458.04,592.40L464.14,592.40L470.23,592.40L476.33,592.40L482.42,592.40L488.51,592.40C490.55,592.40 492.58,588.70 494.61,588.70C496.64,588.70 498.67,592.40 500.70,592.40L506.80,592.40C508.83,592.40 510.86,584.01 512.89,584.01C514.92,584.01 516.95,592.40 518.98,592.40L525.08,592.40L531.17,592.40L537.27,592.40L543.36,592.40L549.45,592.40L555.55,592.40L561.64,592.40L567.74,592.40C569.77,592.40 571.80,591.04 573.83,591.04C575.86,591.04 577.89,592.40 579.92,592.40C581.96,592.40 583.99,589.32 586.02,589.32C588.05,589.32 590.08,592.40 592.11,592.40C594.14,592.40 596.17,587.34 598.21,587.34C600.24,587.34 602.27,592.40 604.30,592.40C606.33,592.40 608.36,590.43 610.39,590.43C612.43,590.43 614.46,592.40 616.49,592.40L622.58,592.40L628.68,592.40L634.77,592.40L640.86,592.40C642.90,592.40 644.93,586.44 646.96,584.38C648.99,582.33 651.02,580.07 653.05,580.07C655.08,580.07 657.11,590.55 659.15,590.55C661.18,590.55 663.21,587.34 665.24,587.34C667.27,587.34 669.30,592.40 671.33,592.40L677.43,592.40C679.46,592.40 681.49,591.89 683.52,591.17C685.55,590.45 687.58,590.14 689.62,588.08C691.65,586.03 693.68,576.49 695.71,576.49C697.74,576.49 699.77,592.40 701.80,592.40L707.90,592.40L713.99,592.40L720.09,592.40L726.18,592.40L732.27,592.40L738.37,592.40L744.46,592.40L750.56,592.40L756.65,592.40L762.74,592.40L768.84,592.40L774.93,592.40L781.03,592.40L787.12,592.40L793.21,592.40L799.31,592.40L805.40,592.40L811.50,592.40L817.59,592.40L823.68,592.40L829.78,592.40L835.87,592.40L841.97,592.40L841.97,592.4L299.6,592.4Z" fill="#22c55e" fill-opacity="0.6"/>
<path d="M299.60,588.45C301.63,590.43 303.66,592.40 305.69,592.40L311.79,592.40L317.88,592.40L323.98,592.40L330.07,592.40L336.16,592.40L342.26,592.40L348.35,592.40L354.45,592.40C356.48,592.40 358.51,586.97 360.54,586.97C362.57,586.97 364.60,592.40 366.63,592.40L372.73,592.40L378.82,592.40L384.92,592.40L391.01,592.40L397.10,592.40L403.20,592.40L409.29,592.40L415.39,592.40L421.48,592.40L427.57,592.40L433.67,592.40L439.76,592.40L445.86,592.40L451.95,592.40L458.04,592.40L464.14,592.40L470.23,592.40L476.33,592.40L482.42,592.40L488.51,592.40C490.55,592.40 492.58,588.70 494.61,588.70C496.64,588.70 498.67,592.40 500.70,592.40L506.80,592.40C508.83,592.40 510.86,584.01 512.89,584.01C514.92,584.01 516.95,592.40 518.98,592.40L525.08,592.40L531.17,592.40L537.27,592.40L543.36,592.40L549.45,592.40L555.55,592.40L561.64,592.40L567.74,592.40C569.77,592.40 571.80,591.04 573.83,591.04C575.86,591.04 577.89,592.40 579.92,592.40C581.96,592.40 583.99,589.32 586.02,589.32C588.05,589.32 590.08,592.40 592.11,592.40C594.14,592.40 596.17,587.34 598.21,587.34C600.24,587.34 602.27,592.40 604.30,592.40C606.33,592.40 608.36,590.43 610.39,590.43C612.43,590.43 614.46,592.40 616.49,592.40L622.58,592.40L628.68,592.40L634.77,592.40L640.86,592.40C642.90,592.40 644.93,586.44 646.96,584.38C648.99,582.33 651.02,580.07 653.05,580.07C655.08,580.07 657.11,590.55 659.15,590.55C661.18,590.55 663.21,587.34 665.24,587.34C667.27,587.34 669.30,592.40 671.33,592.40L677.43,592.40C679.46,592.40 681.49,591.89 683.52,591.17C685.55,590.45 687.58,590.14 689.62,588.08C691.65,586.03 693.68,576.49 695.71,576.49C697.74,576.49 699.77,592.40 701.80,592.40L707.90,592.40L713.99,592.40L720.09,592.40L726.18,592.40L732.27,592.40L738.37,592.40L744.46,592.40L750.56,592.40L756.65,592.40L762.74,592.40L768.84,592.40L774.93,592.40L781.03,592.40L787.12,592.40L793.21,592.40L799.31,592.40L805.40,592.40L811.50,592.40L817.59,592.40L823.68,592.40L829.78,592.40L835.87,592.40L841.97,592.40" fill="none" stroke="#3fd07a" stroke-width="1.55" stroke-linejoin="round"/>
</svg>
<span class="t" id="yl0" style="left:280.62px;top:587px;font-size:9.60px;line-height:11px;color:#e5e7eb;font-weight:700;transform:scaleX(1.2909);">$0</span>
<span class="t" id="yl1" style="left:258.62px;top:550px;font-size:9.60px;line-height:11px;color:#e5e7eb;font-weight:700;transform:scaleX(1.3308);">$3000</span>
<span class="t" id="yl2" style="left:258.62px;top:513px;font-size:9.60px;line-height:11px;color:#e5e7eb;font-weight:700;transform:scaleX(1.3308);">$6000</span>
<span class="t" id="yl3" style="left:258.62px;top:476px;font-size:9.60px;line-height:11px;color:#e5e7eb;font-weight:700;transform:scaleX(1.3308);">$9000</span>
<span class="t" id="yl4" style="left:255.46px;top:447px;font-size:9.60px;line-height:11px;color:#e5e7eb;font-weight:700;transform:scaleX(1.2253);">$12000</span>
<span class="t" id="xl0" style="left:291.00px;top:595px;font-size:9.60px;line-height:11px;color:#e5e7eb;font-weight:700;transform:scaleX(1.0888);">Jul 31</span>
<span class="t" id="xl1" style="left:329.76px;top:595px;font-size:9.60px;line-height:11px;color:#e5e7eb;font-weight:700;transform:scaleX(1.2231);">Aug 07</span>
<span class="t" id="xl2" style="left:373.46px;top:595px;font-size:9.60px;line-height:11px;color:#e5e7eb;font-weight:700;transform:scaleX(1.1213);">Aug 14</span>
<span class="t" id="xl3" style="left:416.88px;top:595px;font-size:9.60px;line-height:11px;color:#e5e7eb;font-weight:700;transform:scaleX(1.1174);">Aug 21</span>
<span class="t" id="xl4" style="left:462.96px;top:595px;font-size:9.60px;line-height:11px;color:#e5e7eb;font-weight:700;transform:scaleX(1.2212);">Aug 29</span>
<span class="t" id="xl5" style="left:511.75px;top:595px;font-size:9.60px;line-height:11px;color:#e5e7eb;font-weight:700;transform:scaleX(1.2788);">Sep 06</span>
<span class="t" id="xl6" style="left:556.75px;top:595px;font-size:9.60px;line-height:11px;color:#e5e7eb;font-weight:700;transform:scaleX(1.1052);">Sep 13</span>
<span class="t" id="xl7" style="left:597.24px;top:595px;font-size:9.60px;line-height:11px;color:#e5e7eb;font-weight:700;transform:scaleX(1.2543);">Sep 20</span>
<span class="t" id="xl8" style="left:640.88px;top:595px;font-size:9.60px;line-height:11px;color:#e5e7eb;font-weight:700;transform:scaleX(1.2234);">Sep 27</span>
<span class="t" id="xl9" style="left:683.52px;top:595px;font-size:9.60px;line-height:11px;color:#e5e7eb;font-weight:700;transform:scaleX(1.2710);">Oct 04</span>
<span class="t" id="xl10" style="left:729.78px;top:595px;font-size:9.60px;line-height:11px;color:#e5e7eb;font-weight:700;transform:scaleX(1.0377);">Oct 11</span>
<span class="t" id="xl11" style="left:765.33px;top:595px;font-size:9.60px;line-height:11px;color:#e5e7eb;font-weight:700;transform:scaleX(1.0981);">Oct 17</span>
<span class="t" id="xl12" style="left:806.37px;top:595px;font-size:9.60px;line-height:11px;color:#e5e7eb;font-weight:700;transform:scaleX(1.2253);">Oct 27</span>
<span class="t" id="days" style="left:556.60px;top:610px;font-size:9.00px;line-height:10px;color:#78818f;font-weight:400;transform:scaleX(1.4420);">Days</span>
<span class="t" id="usd" style="left:254.5px;top:508.8px;font-size:11.4px;color:#7c8594;font-weight:400;transform:translate(-50%,-50%) rotate(-90deg) scaleX(0.7730);transform-origin:center">USD</span>
</main>
<div class="topline"></div>
</body></html>
